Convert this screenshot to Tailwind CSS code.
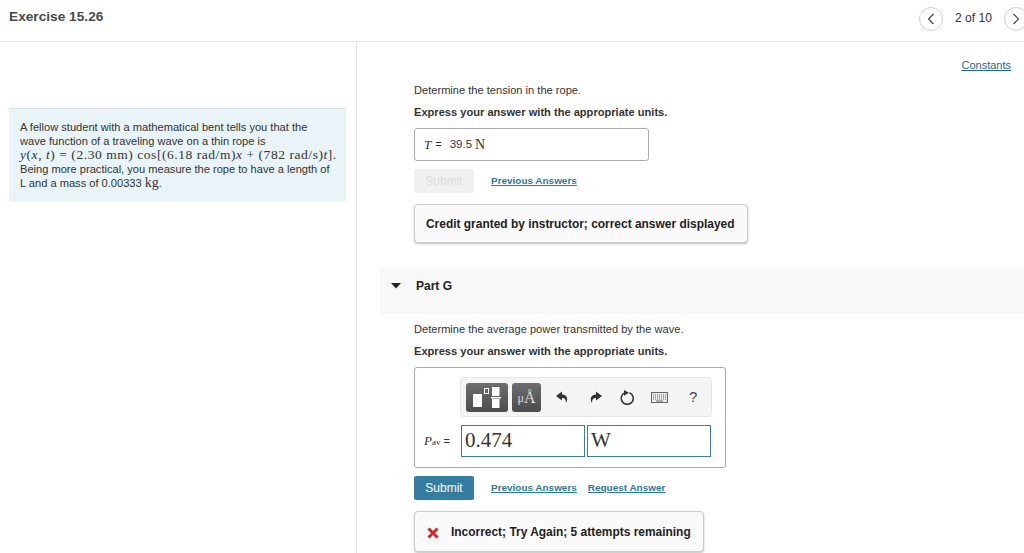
<!DOCTYPE html>
<html>
<head>
<meta charset="utf-8">
<script src="https://cdn.jsdelivr.net/npm/@tailwindcss/browser@4"></script>
</head>
<body class="bg-white overflow-hidden font-['Liberation_Sans',Arial,sans-serif] text-[#222]">
<div class="w-[1024px] h-[553px] overflow-hidden flex flex-col">
  <header class="h-[42px] shrink-0 border-b border-[#e5e5e5] flex items-center pl-[9px] pb-[6px]">
    <h1 class="text-[13.7px] font-bold text-[#4a4a4a]">Exercise 15.26</h1>
    <div class="ml-auto flex items-center -mr-[4px] pt-[2px]">
      <span class="w-[24px] h-[24px] rounded-full border border-[#d0d0d0] flex items-center justify-center">
        <svg width="8" height="12" viewBox="0 0 8 12" fill="none" stroke="#444" stroke-width="1.2"><path d="M6.5 1 L1.5 6 L6.5 11"/></svg>
      </span>
      <span class="text-[12.1px] w-[37px] whitespace-nowrap text-[#333] ml-[12px] mr-[12px]">2 of 10</span>
      <span class="w-[24px] h-[24px] rounded-full border border-[#d0d0d0] flex items-center justify-center">
        <svg width="8" height="12" viewBox="0 0 8 12" fill="none" stroke="#444" stroke-width="1.2"><path d="M1.5 1 L6.5 6 L1.5 11"/></svg>
      </span>
    </div>
  </header>
  <div class="flex flex-1 min-h-0">
    <aside class="w-[357px] shrink-0 border-r border-[#e5e5e5] pt-[66px] pl-[9px] pr-[10px]">
      <div class="bg-[#e8f4f7] border-t border-[#dcdcdc] h-[94px] pl-[11px] pr-[8px] pt-[11px] text-[11.1px] leading-[14px] text-[#333]">
        <p class="whitespace-nowrap">A fellow student with a mathematical bent tells you that the</p>
        <p class="whitespace-nowrap">wave function of a traveling wave on a thin rope is</p>
        <p class="whitespace-nowrap font-['Liberation_Serif',serif] text-[13.5px] tracking-[0.55px]"><i>y</i>(<i>x</i>, <i>t</i>) = (2.30 mm) cos[(6.18 rad/m)<i>x</i> + (782 rad/s)<i>t</i>].</p>
        <p class="whitespace-nowrap">Being more practical, you measure the rope to have a length of</p>
        <p class="whitespace-nowrap">L and a mass of 0.00333 <span class="font-['Liberation_Serif',serif] text-[14px]">kg</span>.</p>
      </div>
    </aside>
    <main class="flex-1 min-w-0 relative">
      <div class="flex justify-end pr-[13px] pt-[17px] h-[41px]">
        <a class="text-[11px] leading-[13px] text-[#1f6a8a] underline">Constants</a>
      </div>
      <div class="pl-[57px]">
        <p class="text-[11.1px] leading-[14px] text-[#333]">Determine the tension in the rope.</p>
        <p class="text-[11.1px] leading-[14px] font-bold text-[#333] mt-[8px]">Express your answer with the appropriate units.</p>
        <div class="mt-[9px] w-[235px] h-[33px] border border-[#aaa] rounded-[3px] flex items-center pl-[9px] text-[#333]">
          <span class="font-['Liberation_Serif',serif] italic text-[13px]">T</span>
          <span class="text-[11px] ml-[4px]">=</span>
          <span class="text-[11.5px] ml-[8px]">39.5</span>
          <span class="font-['Liberation_Serif',serif] text-[14px] ml-[3px]">N</span>
        </div>
        <div class="mt-[8px] flex items-center h-[24px]">
          <span class="w-[60px] h-[24px] rounded-[2px] bg-[#f0f0f0] text-[#dcdcdc] text-[12px] flex items-center justify-center">Submit</span>
          <a class="ml-[17px] text-[9.95px] font-bold text-[#2a7a9b] underline">Previous Answers</a>
        </div>
        <div class="mt-[11px] w-[334px] h-[39px] border border-[#ccc] rounded-[4px] bg-[#fafafa] shadow-[0_1px_2px_rgba(0,0,0,0.25)] flex items-center pl-[11px] pt-[2px] text-[11.95px] font-bold text-[#222]">Credit granted by instructor; correct answer displayed</div>
      </div>
      <div class="mt-[23px] ml-[23px] h-[48px] bg-[#f8f8f8] flex items-center pl-[11px] pb-[8px]">
        <svg width="10" height="6" viewBox="0 0 10 6"><path d="M0 0 H10 L5 5.5 Z" fill="#222"/></svg>
        <span class="ml-[15px] text-[12px] font-bold text-[#222]">Part G</span>
      </div>
      <div class="pl-[57px]">
        <p class="mt-[8px] text-[11.1px] leading-[14px] text-[#333]">Determine the average power transmitted by the wave.</p>
        <p class="text-[11.1px] leading-[14px] font-bold text-[#333] mt-[8px]">Express your answer with the appropriate units.</p>
        <div class="mt-[9px] w-[312px] h-[101px] border border-[#aaa] rounded-[3px] pt-[9px] relative">
          <div class="ml-[45px] w-[252px] h-[40px] rounded-[4px] bg-[#f4f4f4] border border-[#e6e6e6] flex items-center pl-[5px]">
            <span class="w-[42px] h-[29px] rounded-[3px] bg-gradient-to-b from-[#6e6e6e] to-[#4c4c4c] flex items-center justify-center">
              <svg width="28" height="23" viewBox="0 0 28 23">
                <rect x="0" y="8" width="9" height="13" fill="#fff"/>
                <rect x="11.500" y="2.500" width="4" height="5" fill="none" stroke="#fff" stroke-width="1"/>
                <rect x="19" y="1" width="7.500" height="9" fill="#fff"/>
                <rect x="18" y="11" width="10" height="1.500" fill="#fff"/>
                <rect x="19" y="13" width="7.500" height="9" fill="#fff"/>
              </svg>
            </span>
            <span class="ml-[4px] w-[29px] h-[29px] rounded-[3px] bg-gradient-to-b from-[#6e6e6e] to-[#4c4c4c] text-[#dedede] font-['Liberation_Serif',serif] flex items-center justify-center pt-[2px]"><span class="text-[12px]">μ</span><span class="text-[16px]">Å</span></span>
            <svg class="ml-[15px]" width="13" height="13" viewBox="0 0 13 13"><path d="M6 0.500 L0 5 L6 9.500 V7 C8.500 7 10 8 10 12 C12.500 8 11 3.500 6 3.500 Z" fill="#333"/></svg>
            <svg class="ml-[20px]" width="13" height="13" viewBox="0 0 13 13"><path d="M7 0.500 L13 5 L7 9.500 V7 C4.500 7 3 8 3 12 C0.500 8 2 3.500 7 3.500 Z" fill="#333"/></svg>
            <svg class="ml-[18px]" width="15" height="15" viewBox="0 0 15 15" fill="none"><path d="M9.500 2.800 A6 6 0 1 1 5 2.800" stroke="#333" stroke-width="1.500"/><path d="M4 0 L9 2.800 L4 5.800 Z" fill="#333"/></svg>
            <svg class="ml-[16px]" width="17" height="11" viewBox="0 0 17 11"><rect x="0.500" y="0.500" width="16" height="10" fill="#eee" stroke="#666"/><path d="M2 3 H15 M2 5 H15 M2 7 H15" stroke="#666" stroke-dasharray="1 1"/><path d="M5 9 H12" stroke="#666"/></svg>
            <span class="ml-[21px] text-[15px] text-[#444]">?</span>
          </div>
          <div class="mt-[8px] flex items-center">
            <span class="ml-[9px] w-[37px] text-[11px] text-[#333] flex items-baseline"><i class="font-['Liberation_Serif',serif] text-[13px]">P</i><span class="font-['Liberation_Serif',serif] text-[9px]">av</span><span class="ml-[3px]">=</span></span>
            <div class="w-[124px] h-[32px] border border-[#3a7f9f] flex items-center pl-[3px] font-['Liberation_Serif',serif] text-[21px] text-[#333]">0.474</div>
            <div class="ml-[2px] w-[124px] h-[32px] border border-[#3a7f9f] flex items-center pl-[3px] font-['Liberation_Serif',serif] text-[21px] text-[#333]">W</div>
          </div>
        </div>
        <div class="mt-[8px] flex items-center h-[24px]">
          <span class="w-[60px] h-[24px] rounded-[2px] bg-[#347da0] text-white text-[12px] flex items-center justify-center">Submit</span>
          <a class="ml-[17px] text-[9.95px] font-bold text-[#2a7a9b] underline">Previous Answers</a>
          <a class="ml-[11px] text-[9.95px] font-bold text-[#2a7a9b] underline">Request Answer</a>
        </div>
        <div class="mt-[11px] w-[290px] h-[41px] border border-[#ccc] rounded-[4px] bg-[#fafafa] shadow-[0_1px_2px_rgba(0,0,0,0.25)] flex items-center pl-[12px] pt-[3px] text-[11.95px] font-bold text-[#222]">
          <svg width="12" height="12" viewBox="0 0 12 12"><path d="M1.500 1.500 L10.500 10.500 M10.500 1.500 L1.500 10.500" stroke="#d0282c" stroke-width="3"/></svg>
          <span class="ml-[12px]">Incorrect; Try Again; 5 attempts remaining</span>
        </div>
      </div>
    </main>
  </div>
</div>
</body>
</html>
